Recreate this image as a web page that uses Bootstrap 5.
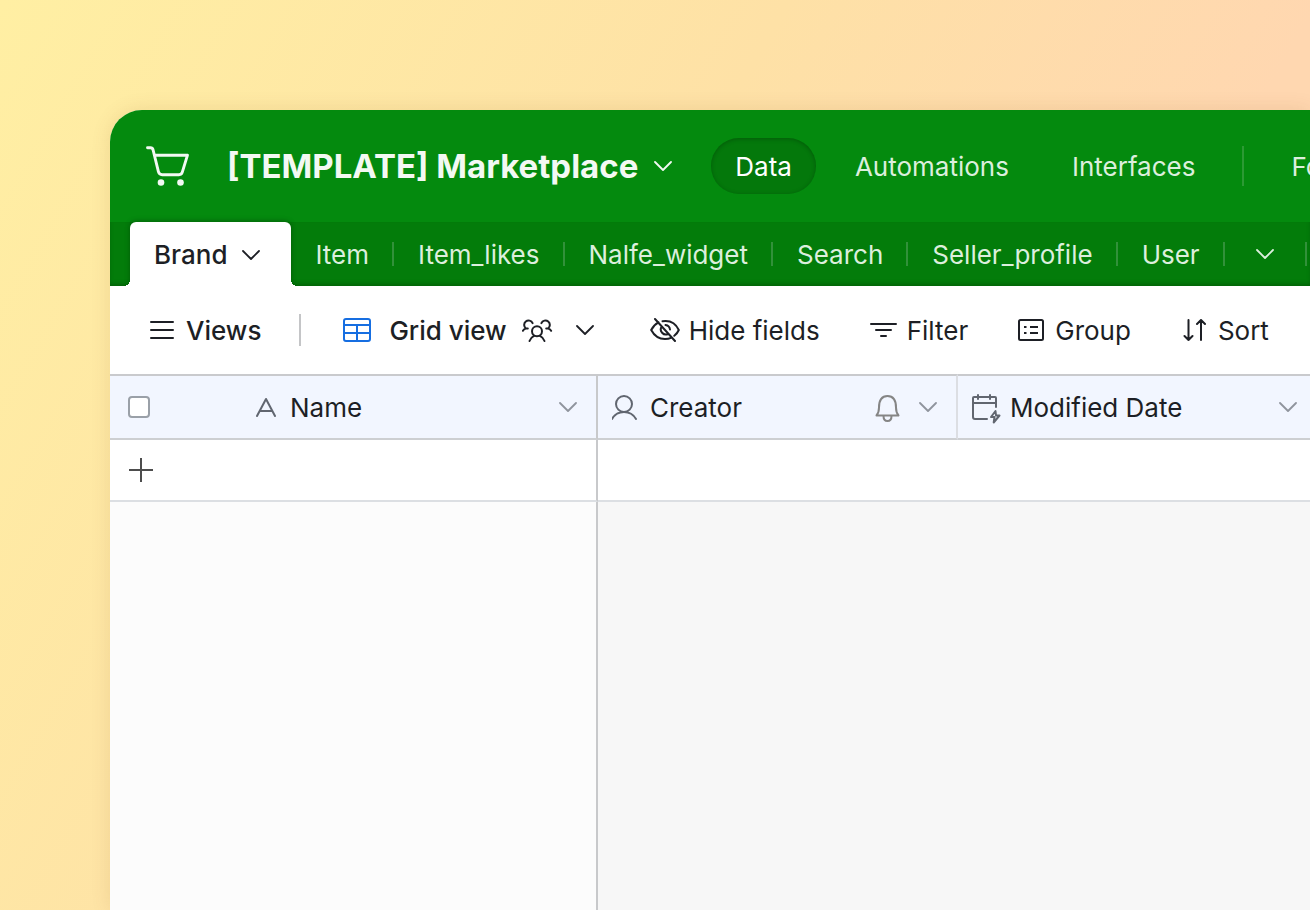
<!DOCTYPE html>
<html lang="en">
<head>
<meta charset="utf-8">
<meta name="viewport" content="width=device-width, initial-scale=1">
<title>[TEMPLATE] Marketplace</title>
<link href="https://cdn.jsdelivr.net/npm/bootstrap@5.3.0/dist/css/bootstrap.min.css" rel="stylesheet">
<style>
  body {
    font-family: Inter, "Liberation Sans", sans-serif;
    font-size: 26px;
    line-height: 32px;
    color: #1d1f25;
    background: linear-gradient(120deg, #ffefa3 0%, #fee1a6 43%, #ffd7b0 72%, #ffd7b0 100%);
  }
  svg { display: block; flex: none; fill: none; stroke: currentColor; stroke-width: 2; }
  .stage { height: 100vh; padding: 110px 0 0 110px; }
  .base-window { border-top-left-radius: 32px; box-shadow: 0 0 20px rgba(120, 70, 0, .12); }
  .plain { background: none; border: 0; padding: 0; color: inherit; white-space: nowrap; }

  .base-bar { height: 112px; padding-left: 36px; background: #048a0e; color: #f3f9f3; }
  .base-title { font-size: 33px; line-height: 40px; font-weight: 700; margin: 0 16px 0 37px; }
  .base-nav { margin-left: 39px; gap: 15px; }
  .base-nav a { padding: 13px 24px 11px; border-radius: 28px; color: #dcefdd; text-decoration: none; }
  .base-nav a.active { background: #04780b; color: #fff; box-shadow: inset 0 1px 4px rgba(0, 0, 0, .25); }
  .bar-rule { width: 2px; height: 40px; margin: 0 8px; background: #2c9a34; }

  .tab-strip { height: 64px; padding-left: 20px; background: #037c0a; box-shadow: inset 0 -3px 4px -1px rgba(0, 50, 0, .35); }
  .tab-strip a { padding: 2px 23px 0 24px; color: #dcefdd; text-decoration: none; white-space: nowrap; }
  .tab-strip a.active {
    position: relative; height: 64px; gap: 14px; margin-right: 1px; padding: 2px 31px 0 24px; font-weight: 500; color: #1d1f25;
    background: #fff; border-radius: 6px 6px 0 0; box-shadow: 0 -1px 5px rgba(0, 40, 0, .4);
    clip-path: inset(-8px -8px 0 -8px);
  }
  .tab-strip a.active::before, .tab-strip a.active::after {
    content: ""; position: absolute; bottom: 0; width: 6px; height: 6px;
  }
  .tab-strip a.active::before { left: -6px; background: radial-gradient(circle at 0 0, transparent 6px, #fff 6px); }
  .tab-strip a.active::after { right: -6px; background: radial-gradient(circle at 100% 0, transparent 6px, #fff 6px); }
  .tab-strip a.more-tables { padding: 0 31px; }
  .tab-rule { flex: none; width: 2px; height: 24px; background: #32913a; }

  .view-bar { height: 88px; padding-left: 40px; }
  .view-bar .plain { line-height: 30px; padding-top: 2px; }
  .view-rule { width: 2px; height: 32px; background: #c4c5c7; margin: 0 42px 0 38px; }
  .view-menu { margin-right: 6px; }
  .view-name { margin: 0 15px 0 18px; }
  .view-shared { margin-right: 22px; }
  .view-bar .tool { gap: 9px; margin-left: 50px; }
  .view-bar svg { margin-top: -2px; }
  .grid-icon { color: #166ee1; }

  .grid-table { table-layout: fixed; width: 100%; border-collapse: separate; border-spacing: 0; }
  .grid-table th { height: 66px; padding: 0 19px 0 14px; font-weight: 400; background: #f2f6ff;
    border-top: 2px solid #c9cacd; border-bottom: 2px solid #cdcfd2; border-right: 2px solid #dcdee3; }
  .grid-table th:last-child { padding-right: 13px; border-right: 0; }
  .grid-table th span { padding-top: 2px; }
  .grid-table td { padding: 0; border-right: 0; }
  .grid-table .primary { border-right: 2px solid #c8c9cb; }
  .grid-table th.primary { padding-left: 18px; }
  .col-primary { width: 488px; }
  .col-field { width: 360px; }
  .add-row td { height: 62px; background: #fff; border-bottom: 2px solid #dcdfe3; }
  .add-row button { margin-left: 18px; color: #4d4d4d; }
  .empty-row td { background: #f7f7f7; }
  .empty-row td.primary { background: #fcfcfc; }
  .form-check-input.row-check { width: 22px; height: 22px; margin: 0 106px 0 0; border: 2px solid #9aa0a8; border-radius: 4px; }
  .field-icon { color: #616670; }
  .field-text-icon { margin-right: 14px; }
  .field-bell { margin-right: 18px; color: #858585; }
  .field-menu { color: #8f949d; }
</style>
</head>
<body>
<svg width="0" height="0" class="position-absolute" aria-hidden="true">
  <symbol id="chevron" viewBox="0 0 18 10"><path d="M1 1l8 8 8-8" stroke-width="1.8" stroke-linecap="round" stroke-linejoin="round"/></symbol>
</svg>
<div class="stage overflow-hidden">
  <div class="base-window d-flex flex-column h-100 overflow-hidden bg-white">

    <header class="base-bar d-flex align-items-center flex-shrink-0">
      <svg width="44" height="42" viewBox="0 0 44 42" stroke-linecap="round" stroke-linejoin="round">
        <path stroke-width="2.9" d="M1.500 2.800H4.500q2 0 2.600 2.200L12.400 26.700q.8 3 3.800 3H33q2.600 0 3.300-2.500L41.500 10.200H8.500"/>
        <circle cx="15" cy="37.500" r="3.300" fill="currentColor" stroke="none"/>
        <circle cx="34.500" cy="37.500" r="3.300" fill="currentColor" stroke="none"/>
      </svg>
      <button class="plain d-flex align-items-center" type="button">
        <span class="base-title">[TEMPLATE] Marketplace</span>
        <svg width="18" height="10"><use href="#chevron"/></svg>
      </button>
      <nav class="base-nav d-flex align-items-center">
        <a class="active" href="#">Data</a>
        <a href="#">Automations</a>
        <a href="#">Interfaces</a>
        <span class="bar-rule"></span>
        <a href="#">Forms</a>
      </nav>
    </header>

    <nav class="tab-strip d-flex align-items-center flex-shrink-0">
      <a class="active d-flex align-items-center" href="#">Brand <svg width="18" height="10"><use href="#chevron"/></svg></a>
      <a href="#">Item</a><span class="tab-rule"></span>
      <a href="#">Item_likes</a><span class="tab-rule"></span>
      <a href="#">Nalfe_widget</a><span class="tab-rule"></span>
      <a href="#">Search</a><span class="tab-rule"></span>
      <a href="#">Seller_profile</a><span class="tab-rule"></span>
      <a href="#">User</a><span class="tab-rule"></span>
      <a class="more-tables" href="#" aria-label="More tables"><svg width="18" height="10"><use href="#chevron"/></svg></a><span class="tab-rule"></span>
    </nav>

    <div class="view-bar d-flex align-items-center flex-shrink-0">
      <button class="plain d-flex align-items-center fw-medium" type="button">
        <svg class="me-2" width="28" height="18" viewBox="0 0 28 18"><path d="M1 1h22M1 9h22M1 17h22" stroke-linecap="round"/></svg>Views
      </button>
      <span class="view-rule"></span>
      <button class="view-menu plain d-flex align-items-center fw-medium" type="button">
        <svg class="grid-icon" width="28" height="24" viewBox="0 0 28 24"><rect x="1" y="1" width="26" height="22" rx="2"/><path d="M1 7h26M1 15h26M14 7v16"/></svg>
        <span class="view-name">Grid view</span>
        <svg class="view-shared" width="32" height="24" viewBox="0 0 32 24" stroke-linecap="round" stroke-linejoin="round">
          <circle cx="15" cy="13.300" r="5"/>
          <path d="M7.500 23q1.500-3.800 4.500-5.200M22.500 23q-1.500-3.800-4.500-5.200"/>
          <path d="M10.600 5.200A4.400 4.400 0 1 0 4 10.500h1.800M4 10.500Q2 10.800 .9 12.800M19.400 5.200A4.400 4.400 0 1 1 26 10.500h-1.800M26 10.500q2 .3 3.100 2.300"/>
        </svg>
        <svg width="18" height="10"><use href="#chevron"/></svg>
      </button>
      <button class="tool plain d-flex align-items-center" type="button">
        <svg width="30" height="24" viewBox="0 0 30 24" stroke-linecap="round">
          <path d="M8.500 4.300Q3.500 7 1.200 12 6 21 15 21q3.500 0 6-1.200M12.500 3.200Q24 1.500 28.800 12q-1.500 3.500-4.500 5.800M5 1l20 22M11.800 8.500a5 5 0 0 0 6.500 7.300M15.500 7q4 .5 4.500 4.500"/>
        </svg>Hide fields
      </button>
      <button class="tool plain d-flex align-items-center" type="button">
        <svg width="28" height="16" viewBox="0 0 28 16"><path d="M1 2h25M6 8h15M11 14h5" stroke-linecap="round"/></svg>Filter
      </button>
      <button class="tool plain d-flex align-items-center" type="button">
        <svg width="28" height="22" viewBox="0 0 28 22"><rect x="1" y="1" width="24" height="20" rx="1.500"/><path d="M12 8h8M12 14h8M6 8h2.500M6 14h2.500"/></svg>Group
      </button>
      <button class="tool plain d-flex align-items-center" type="button">
        <svg width="28" height="22" viewBox="0 0 28 22" stroke-linecap="round" stroke-linejoin="round"><path d="M7.500 1v20M3.500 17l4 4 4-4M20 21V1M16 5l4-4 4 4"/></svg>Sort
      </button>
    </div>

    <div class="flex-grow-1">
      <table class="grid-table h-100">
        <colgroup><col class="col-primary"><col class="col-field"><col></colgroup>
        <thead>
          <tr>
            <th class="primary" scope="col">
              <div class="d-flex align-items-center">
                <input class="form-check-input row-check" type="checkbox" aria-label="Select all rows">
                <svg class="field-icon field-text-icon" width="20" height="20" viewBox="0 0 20 20" stroke-linecap="round" stroke-linejoin="round"><path d="M1 19L10 2l9 17M4 14h12"/></svg>
                <span>Name</span>
                <svg class="field-menu ms-auto" width="18" height="10"><use href="#chevron"/></svg>
              </div>
            </th>
            <th scope="col">
              <div class="d-flex align-items-center">
                <svg class="field-icon me-2" width="30" height="26" viewBox="0 0 30 26" stroke-linecap="round"><circle cx="12" cy="10" r="8"/><path d="M0 25Q4 18 12 18t12 7"/></svg>
                <span>Creator</span>
                <svg class="field-bell ms-auto" width="26" height="30" viewBox="0 0 26 30" stroke-linejoin="round"><path d="M1.500 23.500q2.500-3 2.500-8Q4 4 12.500 4T21 15.500q0 5 2.500 8zM8.500 24q0 5 4 5t4-5"/></svg>
                <svg class="field-menu" width="18" height="10"><use href="#chevron"/></svg>
              </div>
            </th>
            <th scope="col">
              <div class="d-flex align-items-center">
                <svg class="field-icon me-2" width="30" height="34" viewBox="0 0 30 34" stroke-linecap="round" stroke-linejoin="round"><path d="M15 29H3q-2 0-2-2V8q0-1 1-1h21q1 0 1 1v9M1 13h23M6 5v4M18 5v4"/><path d="M23.500 21l-4.500 6h3.500l-.8 5.500 5.800-7H24z"/></svg>
                <span>Modified Date</span>
                <svg class="field-menu ms-auto" width="18" height="10"><use href="#chevron"/></svg>
              </div>
            </th>
          </tr>
        </thead>
        <tbody>
          <tr class="add-row">
            <td class="primary">
              <button class="plain d-block" type="button" aria-label="Add row"><svg width="26" height="24" viewBox="0 0 26 24"><path d="M1 12h24M13 0v24"/></svg></button>
            </td>
            <td colspan="2"></td>
          </tr>
          <tr class="empty-row"><td class="primary"></td><td colspan="2"></td></tr>
        </tbody>
      </table>
    </div>
  </div>
</div>
<script src="https://cdn.jsdelivr.net/npm/bootstrap@5.3.0/dist/js/bootstrap.bundle.min.js"></script>
</body>
</html>
